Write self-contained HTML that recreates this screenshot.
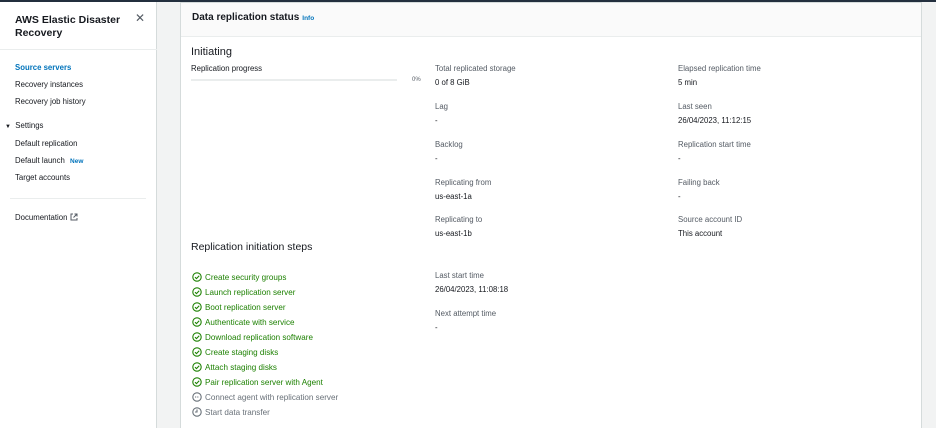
<!DOCTYPE html>
<html style="width:936px;height:428px;overflow:hidden"><head><meta charset="utf-8">
<style>
*{margin:0;padding:0;box-sizing:border-box}
html,body{overflow:hidden}
body{width:936px;height:428px;overflow:hidden;background:#f2f3f3;font-family:"Liberation Sans",sans-serif;color:#16191f;position:relative}
.topbar{position:absolute;left:0;top:0;width:936px;height:2px;background:#232f3e}
.side{position:absolute;left:0;top:2px;width:157px;height:426px;background:#fff;border-right:1px solid #d5dbdb}
.side h1{position:absolute;left:15px;top:12px;font-size:10.5px;font-weight:bold;line-height:13px;width:120px}
.close{position:absolute;left:135px;top:9px;font-size:12px;color:#545b64;font-weight:300}
.hr1{position:absolute;left:0;top:47px;width:157px;border-top:1px solid #eaeded}
.nav{position:absolute;left:15px;font-size:7.8px;color:#16191f}
.card{position:absolute;left:180px;top:2px;width:742px;height:426px;background:#fff;border:1px solid #d5dbdb;border-bottom:none}
.ch{height:34px;background:#fafafa;border-bottom:1px solid #eaeded;padding:9px 11px;font-size:10px;font-weight:bold}
.ch span{color:#0073bb;font-size:6.5px;margin-left:3px}
.t{position:absolute;font-size:7.8px;color:#545b64;white-space:nowrap}
.v{position:absolute;font-size:7.8px;color:#16191f;white-space:nowrap}
.h2{position:absolute;font-size:11px;color:#16191f}
.step{position:absolute;left:192px;font-size:8.1px;color:#1d8102;white-space:nowrap;display:flex;align-items:center}
.step svg{margin-right:3px}
.gray{color:#687078}
</style></head><body>
<div class="topbar"></div>
<div class="side">
<h1>AWS Elastic Disaster Recovery</h1>
<div class="close">✕</div>
<div class="hr1"></div>
<div class="nav" style="top:61px;color:#0073bb;font-weight:bold">Source servers</div>
<div class="nav" style="top:78px">Recovery instances</div>
<div class="nav" style="top:95px">Recovery job history</div>
<div class="nav" style="top:119px;left:5px"><span style="font-size:6px">▼</span>&nbsp; Settings</div>
<div class="nav" style="top:137px">Default replication</div>
<div class="nav" style="top:154px">Default launch <span style="color:#0073bb;font-weight:bold;font-size:6.5px;margin-left:3px">New</span></div>
<div class="nav" style="top:171px">Target accounts</div>
<div style="position:absolute;left:10px;top:196px;width:136px;border-top:1px solid #eaeded"></div>
<div class="nav" style="top:211px">Documentation <svg width="8" height="8" viewBox="0 0 8 8" style="vertical-align:-1px"><path d="M3 1H1v6h6V5M4.5 1H7v2.5M7 1L3.5 4.5" fill="none" stroke="#545b64" stroke-width="1"/></svg></div>
</div>
<div class="card"><div class="ch">Data replication status<span>Info</span></div></div>

<div class="h2" style="left:191px;top:46px">Initiating</div>
<div class="v" style="left:191px;top:64px">Replication progress</div>
<div style="position:absolute;left:191px;top:79px;width:206px;height:2px;background:#eaeded"></div>
<div class="t" style="left:412px;top:77px;font-size:6px">0%</div>

<div class="t" style="left:435px;top:64px">Total replicated storage</div><div class="v" style="left:435px;top:78px">0 of 8 GiB</div>
<div class="t" style="left:435px;top:102px">Lag</div><div class="v" style="left:435px;top:116px">-</div>
<div class="t" style="left:435px;top:140px">Backlog</div><div class="v" style="left:435px;top:154px">-</div>
<div class="t" style="left:435px;top:178px">Replicating from</div><div class="v" style="left:435px;top:192px">us-east-1a</div>
<div class="t" style="left:435px;top:215px">Replicating to</div><div class="v" style="left:435px;top:229px">us-east-1b</div>

<div class="t" style="left:678px;top:64px">Elapsed replication time</div><div class="v" style="left:678px;top:78px">5 min</div>
<div class="t" style="left:678px;top:102px">Last seen</div><div class="v" style="left:678px;top:116px">26/04/2023, 11:12:15</div>
<div class="t" style="left:678px;top:140px">Replication start time</div><div class="v" style="left:678px;top:154px">-</div>
<div class="t" style="left:678px;top:178px">Failing back</div><div class="v" style="left:678px;top:192px">-</div>
<div class="t" style="left:678px;top:215px">Source account ID</div><div class="v" style="left:678px;top:229px">This account</div>

<div class="h2" style="left:191px;top:241px;font-size:10.5px">Replication initiation steps</div>

<div class="t" style="left:435px;top:271px">Last start time</div><div class="v" style="left:435px;top:285px">26/04/2023, 11:08:18</div>
<div class="t" style="left:435px;top:309px">Next attempt time</div><div class="v" style="left:435px;top:323px">-</div>

<div class="step" style="top:272px"><svg width="10" height="10" viewBox="0 0 10 10"><circle cx="5" cy="5" r="4.2" fill="none" stroke="#1d8102" stroke-width="1.1"/><path d="M3 5.2l1.5 1.4L7.2 3.8" fill="none" stroke="#1d8102" stroke-width="1.1"/></svg>Create security groups</div>
<div class="step" style="top:287px"><svg width="10" height="10" viewBox="0 0 10 10"><circle cx="5" cy="5" r="4.2" fill="none" stroke="#1d8102" stroke-width="1.1"/><path d="M3 5.2l1.5 1.4L7.2 3.8" fill="none" stroke="#1d8102" stroke-width="1.1"/></svg>Launch replication server</div>
<div class="step" style="top:302px"><svg width="10" height="10" viewBox="0 0 10 10"><circle cx="5" cy="5" r="4.2" fill="none" stroke="#1d8102" stroke-width="1.1"/><path d="M3 5.2l1.5 1.4L7.2 3.8" fill="none" stroke="#1d8102" stroke-width="1.1"/></svg>Boot replication server</div>
<div class="step" style="top:317px"><svg width="10" height="10" viewBox="0 0 10 10"><circle cx="5" cy="5" r="4.2" fill="none" stroke="#1d8102" stroke-width="1.1"/><path d="M3 5.2l1.5 1.4L7.2 3.8" fill="none" stroke="#1d8102" stroke-width="1.1"/></svg>Authenticate with service</div>
<div class="step" style="top:332px"><svg width="10" height="10" viewBox="0 0 10 10"><circle cx="5" cy="5" r="4.2" fill="none" stroke="#1d8102" stroke-width="1.1"/><path d="M3 5.2l1.5 1.4L7.2 3.8" fill="none" stroke="#1d8102" stroke-width="1.1"/></svg>Download replication software</div>
<div class="step" style="top:347px"><svg width="10" height="10" viewBox="0 0 10 10"><circle cx="5" cy="5" r="4.2" fill="none" stroke="#1d8102" stroke-width="1.1"/><path d="M3 5.2l1.5 1.4L7.2 3.8" fill="none" stroke="#1d8102" stroke-width="1.1"/></svg>Create staging disks</div>
<div class="step" style="top:362px"><svg width="10" height="10" viewBox="0 0 10 10"><circle cx="5" cy="5" r="4.2" fill="none" stroke="#1d8102" stroke-width="1.1"/><path d="M3 5.2l1.5 1.4L7.2 3.8" fill="none" stroke="#1d8102" stroke-width="1.1"/></svg>Attach staging disks</div>
<div class="step" style="top:377px"><svg width="10" height="10" viewBox="0 0 10 10"><circle cx="5" cy="5" r="4.2" fill="none" stroke="#1d8102" stroke-width="1.1"/><path d="M3 5.2l1.5 1.4L7.2 3.8" fill="none" stroke="#1d8102" stroke-width="1.1"/></svg>Pair replication server with Agent</div>
<div class="step gray" style="top:392px"><svg width="10" height="10" viewBox="0 0 10 10"><circle cx="5" cy="5" r="4.2" fill="none" stroke="#687078" stroke-width="1.1"/><path d="M3 5h4" stroke="#687078" stroke-width="1.1" stroke-dasharray="1 0.8"/></svg>Connect agent with replication server</div>
<div class="step gray" style="top:407px"><svg width="10" height="10" viewBox="0 0 10 10"><circle cx="5" cy="5" r="4.2" fill="none" stroke="#687078" stroke-width="1.1"/><path d="M5 2.5V5H3" fill="none" stroke="#687078" stroke-width="1.1"/></svg>Start data transfer</div>
</body></html>
